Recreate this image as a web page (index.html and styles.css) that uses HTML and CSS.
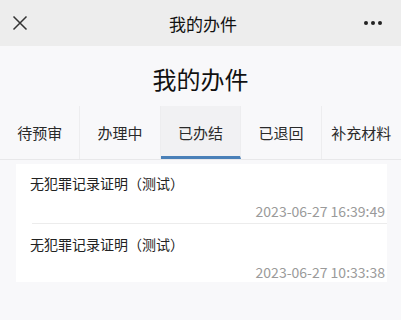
FILE: index.html
```html
<!DOCTYPE html>
<html>
<head>
    <meta charset="UTF-8">
    <title>我的办件</title>
    <link rel="stylesheet" href="styles.css">
</head>
<body>
    <div class="navbar">
        <span class="nav-close">
            <svg width="16" height="16" viewBox="0 0 16 16"><path d="M1.5 1.5L14.5 14.5M14.5 1.5L1.5 14.5" stroke="#333" stroke-width="1.5" fill="none"/></svg>
        </span>
        <span class="nav-title">我的办件</span>
        <span class="nav-more"><i></i><i></i><i></i></span>
    </div>
    <div class="page">
        <h1 class="heading">我的办件</h1>
        <div class="tabs">
            <div class="tab">待预审</div>
            <div class="tab">办理中</div>
            <div class="tab active">已办结</div>
            <div class="tab">已退回</div>
            <div class="tab">补充材料</div>
        </div>
        <div class="list">
            <div class="item">
                <div class="item-title">无犯罪记录证明（测试）</div>
                <div class="item-date">2023-06-27 16:39:49</div>
            </div>
            <div class="item">
                <div class="item-title">无犯罪记录证明（测试）</div>
                <div class="item-date">2023-06-27 10:33:38</div>
            </div>
        </div>
    </div>
</body>
</html>
```

FILE: styles.css
```css
html,
body {
    height: 100%;
}
body {
    margin: 0;
    background: #f8f8fa;
    font-family: "Noto Sans CJK SC", "Noto Sans", sans-serif;
    color: #222;
    overflow: hidden;
}
.navbar {
    height: 46px;
    background: #ededed;
    display: flex;
    align-items: center;
    justify-content: space-between;
    padding: 0 19px 0 12px;
}
.nav-close {
    display: flex;
    width: 16px;
    height: 16px;
}
.nav-title {
    font-size: 17px;
    color: #111;
    margin-left: 14px;
}
.nav-more {
    display: flex;
    gap: 2.5px;
    width: 18px;
}
.nav-more i {
    width: 4.5px;
    height: 4.5px;
    border-radius: 50%;
    background: #222;
}
.heading {
    margin: 0;
    padding: 15px 0 9px;
    text-align: center;
    font-size: 24px;
    font-weight: normal;
    line-height: 36px;
    color: #111;
}
.tabs {
    display: flex;
    height: 53px;
    border-bottom: 1px solid #e8e8ea;
}
.tab {
    flex: 1;
    display: flex;
    align-items: center;
    justify-content: center;
    font-size: 15px;
    color: #2a2a2a;
    border-right: 1px solid #ededef;
    box-sizing: border-box;
}
.tab:last-child {
    border-right: none;
}
.tab.active {
    background: #f1f1f3;
    border-bottom: 3px solid #4a80b8;
    padding-top: 3px;
}
.list {
    margin: 4px 14px 0 16px;
    background: #fff;
}
.item {
    padding: 9px 2px 0 14px;
    height: 50px;
}
.item + .item::before {
    content: "";
    display: block;
    border-top: 1px solid #ececec;
    margin: -9px -2px 10px 2px;
}
.item-title {
    font-size: 14px;
    line-height: 20px;
}
.item-date {
    text-align: right;
    font-size: 14px;
    line-height: 20px;
    color: #9a9a9a;
    margin-top: 8px;
}
```
